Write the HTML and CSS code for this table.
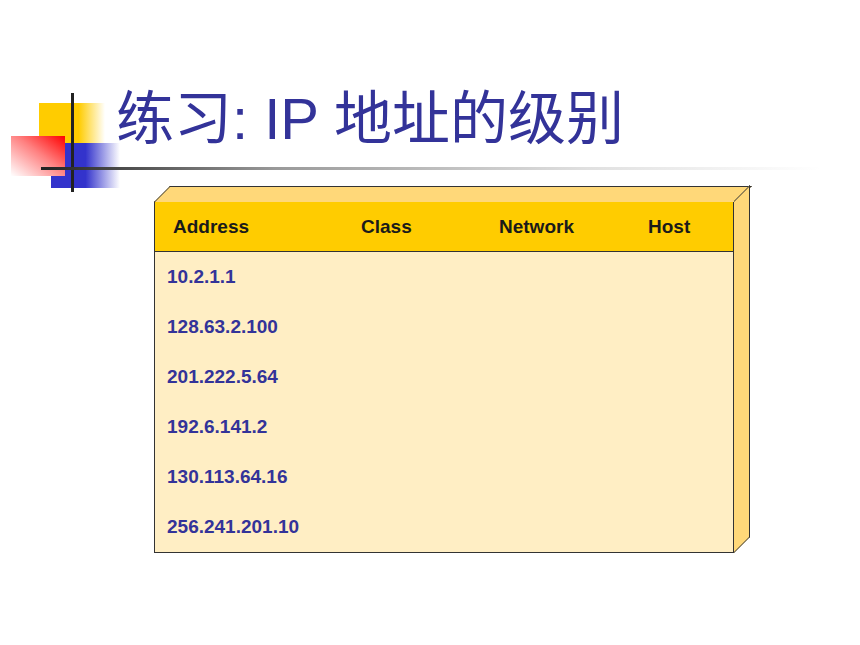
FILE: index.html
```html
<!DOCTYPE html>
<html lang="zh-CN">
<head>
  <meta charset="UTF-8">
  <title>练习: IP 地址的级别</title>
  <link rel="stylesheet" href="styles.css">
</head>
<body>
  <div class="slide">
    <div class="header">
      <svg class="ornament" width="860" height="110" viewBox="0 88 860 110">
        <defs>
          <linearGradient id="gYellow" x1="0" y1="0" x2="1" y2="0">
            <stop offset="0" stop-color="#ffcc00"/>
            <stop offset="0.6" stop-color="#ffcc00"/>
            <stop offset="1" stop-color="#ffffff"/>
          </linearGradient>
          <linearGradient id="gBlue" x1="0" y1="0" x2="1" y2="0">
            <stop offset="0" stop-color="#3333cc"/>
            <stop offset="0.5" stop-color="#3333cc"/>
            <stop offset="1" stop-color="#ffffff"/>
          </linearGradient>
          <linearGradient id="gRed" x1="1" y1="0" x2="0" y2="1">
            <stop offset="0" stop-color="#ff0000"/>
            <stop offset="0.45" stop-color="#ff8080"/>
            <stop offset="1" stop-color="#ffffff"/>
          </linearGradient>
          <linearGradient id="gLine" x1="0" y1="0" x2="1" y2="0">
            <stop offset="0" stop-color="#222222"/>
            <stop offset="0.3" stop-color="#999999"/>
            <stop offset="0.7" stop-color="#e0e0e0"/>
            <stop offset="1" stop-color="#ffffff"/>
          </linearGradient>
        </defs>
        <rect x="39" y="103" width="66" height="40" fill="url(#gYellow)"/>
        <rect x="51" y="143" width="69" height="45" fill="url(#gBlue)"/>
        <rect x="11" y="136" width="54" height="40" fill="url(#gRed)"/>
        <rect x="71" y="93" width="3" height="99" fill="#222"/>
        <rect x="41" y="167" width="780" height="3" fill="url(#gLine)"/>
      </svg>
      <h1>练习: IP 地址的级别</h1>
    </div>

    <div class="box">
      <div class="box-head">
        <span>Address</span>
        <span>Class</span>
        <span>Network</span>
        <span>Host</span>
      </div>
      <div class="box-body">
        <div class="row">10.2.1.1</div>
        <div class="row">128.63.2.100</div>
        <div class="row">201.222.5.64</div>
        <div class="row">192.6.141.2</div>
        <div class="row">130.113.64.16</div>
        <div class="row">256.241.201.10</div>
      </div>
    </div>
  </div>
</body>
</html>
```

FILE: styles.css
```css
* {
  box-sizing: border-box;
  margin: 0;
  padding: 0;
}

body {
  background: #ffffff;
  font-family: "Liberation Sans", Arial, "Noto Sans CJK SC", sans-serif;
}

.slide {
  width: 860px;
  height: 645px;
  padding-top: 88px;
}

.header {
  position: relative;
  height: 113px;
}

.ornament {
  position: absolute;
  left: 0;
  top: 0;
}

h1 {
  position: relative;
  padding-left: 116px;
  padding-top: 2px;
  font-family: "Liberation Sans", "Noto Sans CJK SC", sans-serif;
  font-size: 58px;
  font-weight: normal;
  line-height: 58px;
  color: #333399;
  white-space: nowrap;
}

.box {
  position: relative;
  width: 580px;
  margin-left: 154px;
  border: 1px solid #333;
  background: #ffeec4;
}

/* top face */
.box::before {
  content: "";
  position: absolute;
  left: -1px;
  top: -16px;
  width: 580px;
  height: 15px;
  background: #ffd879;
  border: 1px solid #333;
  border-bottom: none;
  transform-origin: bottom left;
  transform: skewX(-45deg);
}

/* right face */
.box::after {
  content: "";
  position: absolute;
  left: 579px;
  top: -1px;
  width: 15px;
  height: 350px;
  background: #ffd879;
  border: 1px solid #333;
  border-left: none;
  transform-origin: top left;
  transform: skewY(-45deg);
}

.box-head {
  display: grid;
  grid-template-columns: 188px 138px 149px 1fr;
  align-items: center;
  height: 50px;
  padding-left: 18px;
  background: #ffcc00;
  border-bottom: 1px solid #333;
  font-size: 19px;
  font-weight: bold;
  color: #1a1a1a;
}

.row {
  display: flex;
  align-items: center;
  height: 50px;
  padding-left: 12px;
  font-size: 19px;
  font-weight: bold;
  color: #333399;
}
```
